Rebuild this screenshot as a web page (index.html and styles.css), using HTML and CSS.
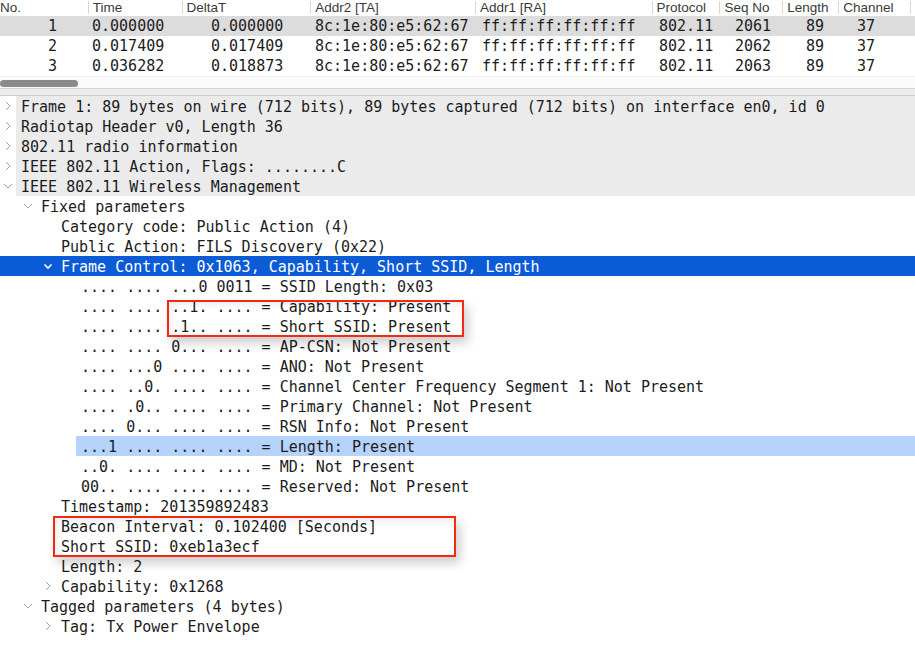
FILE: index.html
```html
<!DOCTYPE html>
<html>
<head>
<meta charset="utf-8">
<link rel="stylesheet" href="styles.css">
</head>
<body>
<div class="app">
  <div class="plist">
    <div class="phead">
      <div class="hc c-no">No.</div>
      <div class="hc c-time">Time</div>
      <div class="hc c-delta">DeltaT</div>
      <div class="hc c-a2">Addr2 [TA]</div>
      <div class="hc c-a1">Addr1 [RA]</div>
      <div class="hc c-proto">Protocol</div>
      <div class="hc c-seq">Seq No</div>
      <div class="hc c-len">Length</div>
      <div class="hc c-ch">Channel</div>
      <div class="hc c-rest"></div>
    </div>
    <div class="prow sel">
      <div class="dc c-no">1</div><div class="dc c-time">0.000000</div><div class="dc c-delta">0.000000</div><div class="dc c-a2">8c:1e:80:e5:62:67</div><div class="dc c-a1">ff:ff:ff:ff:ff:ff</div><div class="dc c-proto">802.11</div><div class="dc c-seq">2061</div><div class="dc c-len">89</div><div class="dc c-ch">37</div>
    </div>
    <div class="prow">
      <div class="dc c-no">2</div><div class="dc c-time">0.017409</div><div class="dc c-delta">0.017409</div><div class="dc c-a2">8c:1e:80:e5:62:67</div><div class="dc c-a1">ff:ff:ff:ff:ff:ff</div><div class="dc c-proto">802.11</div><div class="dc c-seq">2062</div><div class="dc c-len">89</div><div class="dc c-ch">37</div>
    </div>
    <div class="prow">
      <div class="dc c-no">3</div><div class="dc c-time">0.036282</div><div class="dc c-delta">0.018873</div><div class="dc c-a2">8c:1e:80:e5:62:67</div><div class="dc c-a1">ff:ff:ff:ff:ff:ff</div><div class="dc c-proto">802.11</div><div class="dc c-seq">2063</div><div class="dc c-len">89</div><div class="dc c-ch">37</div>
    </div>
    <div class="hscroll"><div class="thumb"></div></div>
  </div>
  <div class="splitter"></div>
  <div class="tree">
    <div class="row l0 top"><span class="tw"><svg width="16" height="20" viewBox="0 0 16 20"><polyline points="6,6 10,10 6,14" class="chev"/></svg></span><span class="lbl">Frame 1: 89 bytes on wire (712 bits), 89 bytes captured (712 bits) on interface en0, id 0</span></div>
    <div class="row l0 top"><span class="tw"><svg width="16" height="20" viewBox="0 0 16 20"><polyline points="6,6 10,10 6,14" class="chev"/></svg></span><span class="lbl">Radiotap Header v0, Length 36</span></div>
    <div class="row l0 top"><span class="tw"><svg width="16" height="20" viewBox="0 0 16 20"><polyline points="6,6 10,10 6,14" class="chev"/></svg></span><span class="lbl">802.11 radio information</span></div>
    <div class="row l0 top"><span class="tw"><svg width="16" height="20" viewBox="0 0 16 20"><polyline points="6,6 10,10 6,14" class="chev"/></svg></span><span class="lbl">IEEE 802.11 Action, Flags: ........C</span></div>
    <div class="row l0 top"><span class="tw"><svg width="16" height="20" viewBox="0 0 16 20"><polyline points="4,8 8,12 12,8" class="chev"/></svg></span><span class="lbl">IEEE 802.11 Wireless Management</span></div>
    <div class="row l1"><span class="tw"><svg width="16" height="20" viewBox="0 0 16 20"><polyline points="4,8 8,12 12,8" class="chev"/></svg></span><span class="lbl">Fixed parameters</span></div>
    <div class="row l2"><span class="tw"></span><span class="lbl">Category code: Public Action (4)</span></div>
    <div class="row l2"><span class="tw"></span><span class="lbl">Public Action: FILS Discovery (0x22)</span></div>
    <div class="row l2 selected"><span class="tw"><svg width="16" height="20" viewBox="0 0 16 20"><polyline points="4.5,8.5 8,12 11.5,8.5" class="chev w"/></svg></span><span class="lbl">Frame Control: 0x1063, Capability, Short SSID, Length</span></div>
    <div class="row l3"><span class="tw"></span><span class="lbl">.... .... ...0 0011 = SSID Length: 0x03</span></div>
    <div class="row l3"><span class="tw"></span><span class="lbl">.... .... ..1. .... = Capability: Present</span></div>
    <div class="row l3"><span class="tw"></span><span class="lbl">.... .... .1.. .... = Short SSID: Present</span></div>
    <div class="row l3"><span class="tw"></span><span class="lbl">.... .... 0... .... = AP-CSN: Not Present</span></div>
    <div class="row l3"><span class="tw"></span><span class="lbl">.... ...0 .... .... = ANO: Not Present</span></div>
    <div class="row l3"><span class="tw"></span><span class="lbl">.... ..0. .... .... = Channel Center Frequency Segment 1: Not Present</span></div>
    <div class="row l3"><span class="tw"></span><span class="lbl">.... .0.. .... .... = Primary Channel: Not Present</span></div>
    <div class="row l3"><span class="tw"></span><span class="lbl">.... 0... .... .... = RSN Info: Not Present</span></div>
    <div class="row l3 hl"><span class="tw"></span><span class="lbl">...1 .... .... .... = Length: Present</span></div>
    <div class="row l3"><span class="tw"></span><span class="lbl">..0. .... .... .... = MD: Not Present</span></div>
    <div class="row l3"><span class="tw"></span><span class="lbl">00.. .... .... .... = Reserved: Not Present</span></div>
    <div class="row l2"><span class="tw"></span><span class="lbl">Timestamp: 201359892483</span></div>
    <div class="row l2"><span class="tw"></span><span class="lbl">Beacon Interval: 0.102400 [Seconds]</span></div>
    <div class="row l2"><span class="tw"></span><span class="lbl">Short SSID: 0xeb1a3ecf</span></div>
    <div class="row l2"><span class="tw"></span><span class="lbl">Length: 2</span></div>
    <div class="row l2"><span class="tw"><svg width="16" height="20" viewBox="0 0 16 20"><polyline points="6,6 10,10 6,14" class="chev"/></svg></span><span class="lbl">Capability: 0x1268</span></div>
    <div class="row l1"><span class="tw"><svg width="16" height="20" viewBox="0 0 16 20"><polyline points="4,8 8,12 12,8" class="chev"/></svg></span><span class="lbl">Tagged parameters (4 bytes)</span></div>
    <div class="row l2"><span class="tw"><svg width="16" height="20" viewBox="0 0 16 20"><polyline points="6,6 10,10 6,14" class="chev"/></svg></span><span class="lbl">Tag: Tx Power Envelope</span></div>

    <div class="callout box1"></div>
    <div class="callout box2"></div>
  </div>
</div>
</body>
</html>
```
FILE: styles.css
```css
html, body {
  margin: 0;
  padding: 0;
  background: #ffffff;
}
body {
  width: 915px;
  height: 650px;
  overflow: hidden;
  font-family: "DejaVu Sans Mono", "Liberation Mono", monospace;
  font-size: 15px;
  color: #1c1c1c;
}
.app {
  display: flex;
  flex-direction: column;
}

/* packet list */
.plist {
  display: flex;
  flex-direction: column;
}
.phead {
  display: flex;
  height: 16px;
  background: #ffffff;
  font-family: "Liberation Sans", Arial, sans-serif;
  font-size: 13.5px;
  color: #3a3a3a;
}
.hc {
  box-sizing: border-box;
  padding-left: 4px;
  border-left: 1px solid #d6d6d6;
  height: 13px;
  margin-top: 1px;
  line-height: 13px;
  white-space: nowrap;
  overflow: visible;
}
.hc.c-no { border-left: none; padding-left: 0; }
.prow {
  display: flex;
  height: 20px;
  line-height: 21px;
  white-space: nowrap;
  overflow: hidden;
}
.prow.sel { background: #dcdcdc; }
.dc { box-sizing: border-box; }
.c-no { width: 88px; }
.c-time { width: 94px; }
.c-delta { width: 129px; }
.c-a2 { width: 165px; }
.c-a1 { width: 177px; }
.c-proto { width: 68px; }
.c-seq { width: 63px; }
.c-len { width: 56px; }
.c-ch { width: 72px; }
.c-rest { flex: 1; }

.dc.c-no { text-align: right; padding-right: 31px; }
.dc.c-time { padding-left: 4px; }
.dc.c-delta { padding-left: 29px; }
.dc.c-a2 { padding-left: 4px; }
.dc.c-a1 { padding-left: 6px; }
.dc.c-proto { padding-left: 6px; }
.dc.c-seq { padding-left: 14px; }
.dc.c-len { padding-left: 22px; }
.dc.c-ch { padding-left: 17px; }

.hscroll {
  height: 12px;
  background: #fbfbfb;
  border-top: 1px solid #efefef;
  box-sizing: border-box;
  padding-top: 3px;
}
.thumb {
  width: 78px;
  height: 7px;
  border-radius: 4px;
  background: #8b8b8b;
}
.splitter {
  height: 8px;
  box-sizing: border-box;
  background: #ececec;
  border-top: 1px solid #d4d4d4;
  border-bottom: 1px solid #cfcfcf;
}

/* tree */
.tree {
  position: relative;
  display: flex;
  flex-direction: column;
}
.row {
  display: flex;
  height: 20px;
  line-height: 20px;
  white-space: pre;
}
.row.l1 { padding-left: 20px; }
.row.l2 { padding-left: 40px; }
.row.l3 { padding-left: 60px; }
.tw {
  width: 16px;
  flex: none;
  height: 20px;
}
.tw svg { display: block; }
.lbl {
  flex: 1;
  box-sizing: border-box;
  height: 20px;
  padding-left: 5px;
  padding-top: 1px;
  overflow: hidden;
}
.row.top .lbl { background: #ebebeb; }
.row.selected { background: #0b5ad6; color: #ffffff; }
.row.hl .lbl { background: #b5d3fb; }
.chev {
  fill: none;
  stroke: #a3a3a3;
  stroke-width: 1;
}
.chev.w {
  stroke: #ffffff;
  stroke-width: 1.6;
}

.callout {
  position: absolute;
  box-sizing: border-box;
  border: 2px solid #f22a12;
  box-shadow: 4px 6px 10px rgba(0, 0, 0, 0.2), inset 2px 3px 6px rgba(0, 0, 0, 0.08);
}
.box1 { left: 167px; top: 204px; width: 297px; height: 37px; }
.box2 { left: 53px; top: 420px; width: 403px; height: 41px; }
```
